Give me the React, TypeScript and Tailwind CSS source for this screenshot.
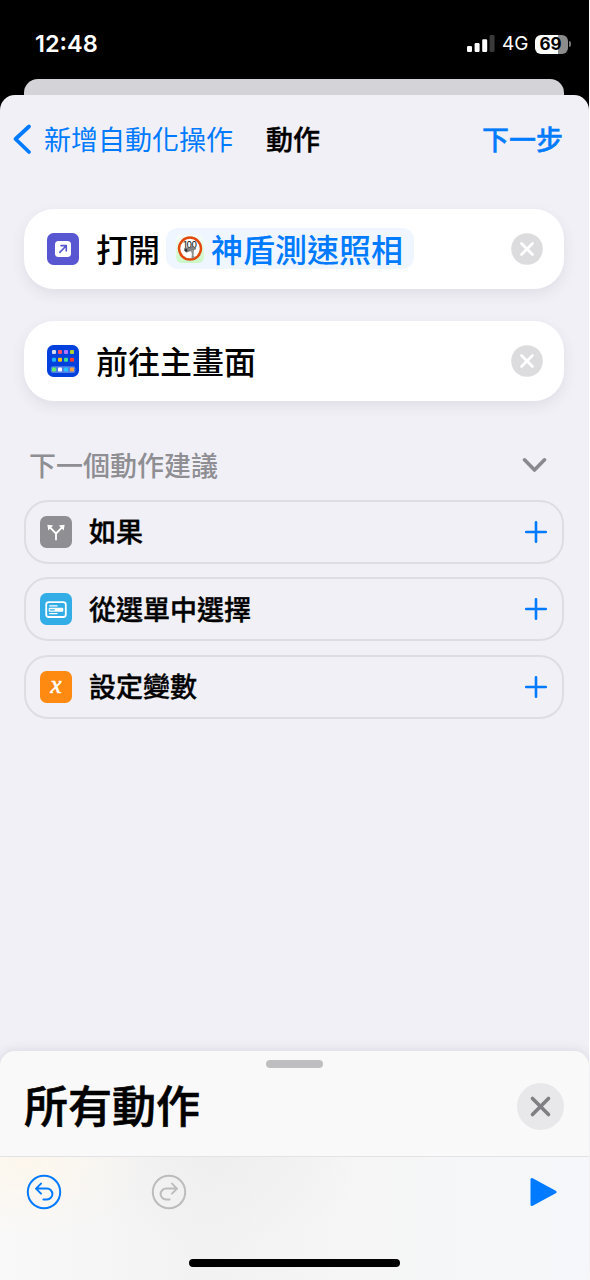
import type { ReactNode } from "react"

const BLUE = "#007aff"

function StatusBar() {
  return (
    <div className="flex h-[79px] items-start justify-between bg-black pt-[32px] pl-[35px] pr-[18px] font-['Inter',sans-serif] text-white">
      <span className="text-[23.5px] leading-[24px] font-semibold">12:48</span>
      <div className="flex h-6 items-center">
        <svg width="28" height="18" viewBox="0 0 28 18" className="mr-[7px]" fill="#fff">
          <rect x="0" y="11" width="5" height="6" rx="1.3" />
          <rect x="7.6" y="8" width="5" height="9" rx="1.3" />
          <rect x="15.2" y="4.3" width="5" height="12.7" rx="1.3" />
          <rect x="22.6" y="0" width="5" height="17" rx="1.3" fill="#3a3a3a" />
        </svg>
        <span className="mr-[7px] w-[26px] text-[19px] leading-6">4G</span>
        <div className="flex h-[19px] w-[33px] items-center justify-center rounded-[6px] bg-[linear-gradient(to_right,#fff_70%,#8c8c8c_70%)] pr-[2px] text-[17px] leading-none font-bold text-black">
          69
        </div>
        <div className="ml-[1px] h-[6px] w-[2px] rounded-r-full bg-[#777]" />
      </div>
    </div>
  )
}

function NavBar() {
  return (
    <div className="flex h-[88px] items-center pl-[12px] pr-[26px] text-[27px] leading-[38px]">
      <svg width="20" height="32" viewBox="0 0 20 32" fill="none" stroke={BLUE} strokeWidth="3.8" strokeLinecap="round" strokeLinejoin="round">
        <path d="M17 3.5 L3.5 16 L17 29" />
      </svg>
      <span className="mb-[1px] ml-[12px] font-normal text-[#007aff]">新增自動化操作</span>
      <span className="mb-[1px] ml-[33px] font-medium text-black [-webkit-text-stroke:0.4px]">動作</span>
      <span className="mb-[1px] ml-auto font-medium text-[#007aff] [-webkit-text-stroke:0.4px]">下一步</span>
    </div>
  )
}

function OpenAppIcon() {
  return (
    <svg width="32" height="32" viewBox="0 0 32 32" fill="none">
      <rect width="32" height="32" rx="6.5" fill="#5856d0" />
      <rect x="8" y="8" width="16" height="16" rx="3.5" fill="#fff" />
      <path d="M12.8 19.4 L19 13 M14 12.6 H19.3 V18" stroke="#5856d0" strokeWidth="1.6" strokeLinecap="round" strokeLinejoin="round" />
    </svg>
  )
}

const homeDots = [
  ["#d5dbe8", "#ff4d67", "#b472ff", "#b0d236"],
  ["#1cb4f5", "#ffc000", "#3ddc97", "#ff3b30"],
  ["#5cf06c", "#ffffff", "#28c6ff", "#ffa040"],
]

function HomeScreenIcon() {
  return (
    <svg width="32" height="32" viewBox="0 0 32 32">
      <rect width="32" height="32" rx="6.5" fill="#0040dd" />
      <rect x="3.7" y="21.2" width="24.6" height="6.8" rx="2" fill="#4f80e8" />
      {homeDots.map((row, r) =>
        row.map((color, c) => (
          <rect key={`${r}-${c}`} x={5 + c * 6} y={[5, 12.7, 22.6][r]} width="4" height="4" rx="1" fill={color} />
        ))
      )}
    </svg>
  )
}

function SpeedCameraIcon() {
  return (
    <svg width="28" height="28" viewBox="0 0 28 28" className="shrink-0">
      <defs>
        <linearGradient id="camBg" x1="0" y1="0" x2="0" y2="1">
          <stop offset="0" stopColor="#f8fdfb" />
          <stop offset="1" stopColor="#c9f7c4" />
        </linearGradient>
      </defs>
      <rect width="28" height="28" rx="6" fill="url(#camBg)" />
      <circle cx="14" cy="13.6" r="11" fill="#fff" stroke="#e24a0c" strokeWidth="2.5" />
      <text x="14" y="12.8" textAnchor="middle" fontSize="8.5" fontWeight="500" letterSpacing="-0.3" fontFamily="Inter, sans-serif" fill="#222">
        100
      </text>
      <path d="M8.4 13.6 L17.8 11.4 L19.8 14 L10 17.2 Z" fill="#858585" stroke="#555" strokeWidth="0.6" />
      <path d="M15 16 L18 14.8 L17.5 20.6 L19 22.4 L15.4 23.4 L15.9 19 Z" fill="#8f8f8f" />
      <circle cx="9.9" cy="15.2" r="1.4" fill="#333" />
    </svg>
  )
}

function ActionCard({ icon, children }: { icon: ReactNode; children: ReactNode }) {
  return (
    <div className="flex items-center rounded-[30px] bg-white pl-[23px] pr-[21px] text-[32px] font-medium text-black shadow-[0_5px_14px_rgba(60,60,90,0.09)]">
      {icon}
      <div className="ml-[17px] flex h-[80.5px] items-center leading-[41px]">{children}</div>
      <svg width="32" height="32" viewBox="0 0 32 32" className="ml-auto">
        <circle cx="16" cy="16" r="15.8" fill="#dcdcde" />
        <path d="M10.5 10.5 L21.5 21.5 M21.5 10.5 L10.5 21.5" stroke="#fff" strokeWidth="2.7" strokeLinecap="round" />
      </svg>
    </div>
  )
}

function BranchIcon() {
  return (
    <svg width="32" height="32" viewBox="0 0 32 32" fill="none">
      <rect width="32" height="32" rx="6.5" fill="#8e8e93" />
      <path d="M16 23.5 V17.5 L10 11.3 M16 17.5 L22 11.3" stroke="#fff" strokeWidth="1.8" strokeLinecap="round" strokeLinejoin="round" />
      <path d="M7.4 8.8 L13.2 9.4 L8.2 14.6 Z M24.6 8.8 L18.8 9.4 L23.8 14.6 Z" fill="#fff" />
    </svg>
  )
}

function MenuIcon() {
  return (
    <svg width="32" height="32" viewBox="0 0 32 32" fill="none">
      <rect width="32" height="32" rx="6.5" fill="#32ade6" />
      <rect x="6.2" y="9.2" width="19.6" height="14.8" rx="2.5" stroke="#fff" strokeWidth="1.8" />
      <path d="M9.8 12.9 H17 M9.8 20.6 H17" stroke="#fff" strokeWidth="1.3" strokeLinecap="round" />
      <rect x="8.7" y="14.8" width="14.6" height="4" rx="1" fill="#fff" />
      <path d="M10.2 16.8 H14.4" stroke="#32ade6" strokeWidth="1.3" strokeLinecap="round" />
    </svg>
  )
}

function VariableIcon() {
  return (
    <div className="flex h-8 w-8 items-center justify-center rounded-[6.5px] bg-[#ff8a12] pb-[4px] font-['Liberation_Serif',serif] text-[25px] leading-none font-normal text-white italic [-webkit-text-stroke:0.6px_white]">
      x
    </div>
  )
}

const suggestions = [
  { label: "如果", icon: <BranchIcon /> },
  { label: "從選單中選擇", icon: <MenuIcon /> },
  { label: "設定變數", icon: <VariableIcon /> },
]

function Suggestions() {
  return (
    <div className="mt-[43px]">
      <div className="flex h-[42px] items-center justify-between pl-[5px] pr-[17px]">
        <span className="mb-[1px] text-[27px] leading-[38px] font-medium text-[#8e8e93]">下一個動作建議</span>
        <svg width="25" height="16" viewBox="0 0 25 16" fill="none" stroke="#8a8a8e" strokeWidth="3.6" strokeLinecap="round" strokeLinejoin="round">
          <path d="M2.5 2.8 L12.5 13 L22.5 2.8" />
        </svg>
      </div>
      <div className="mt-[13.5px] flex flex-col gap-[13.5px]">
        {suggestions.map((item) => (
          <div key={item.label} className="flex h-[64px] items-center rounded-[24px] border-2 border-[#dedde2] pl-[14px] pr-[14px]">
            {item.icon}
            <span className="mb-[1px] ml-[17px] text-[27px] leading-[38px] font-medium text-black [-webkit-text-stroke:0.4px]">{item.label}</span>
            <svg width="24" height="24" viewBox="0 0 24 24" className="ml-auto" stroke={BLUE} strokeWidth="2.6" strokeLinecap="round">
              <path d="M12 2.2 V21.8 M2.2 12 H21.8" />
            </svg>
          </div>
        ))}
      </div>
    </div>
  )
}

function UndoIcon({ color, flipped }: { color: string; flipped?: boolean }) {
  return (
    <svg width="36" height="36" viewBox="0 0 36 36" fill="none" stroke={color} strokeWidth="2" strokeLinecap="round" strokeLinejoin="round" className={flipped ? "-scale-x-100" : ""}>
      <circle cx="18" cy="18" r="16.2" />
      <path d="M15 9.6 L10 14.6 L15 19.6 M10.5 14.6 H21 A5.3 5.3 0 0 1 21 25.4 H17.4" />
    </svg>
  )
}

function BottomSheet() {
  return (
    <div className="mt-auto rounded-t-[15px] bg-[#f9f9f9] shadow-[0_0_12px_rgba(60,60,90,0.14)]">
      <div className="flex h-[106px] flex-col border-b border-[#e3e3e5]">
        <div className="mt-[9px] h-2 w-[57px] shrink-0 self-center rounded-full bg-[#bfbfc1]" />
        <div className="flex h-[68px] items-center justify-between pt-[8px] pl-[24px] pr-[25px]">
          <span className="mb-[3px] text-[44px] leading-[53px] font-medium text-black [-webkit-text-stroke:0.6px]">所有動作</span>
          <svg width="47" height="47" viewBox="0 0 47 47">
            <circle cx="23.5" cy="23.5" r="23.5" fill="#e8e8ea" />
            <path d="M15.5 15.5 L31.5 31.5 M31.5 15.5 L15.5 31.5" stroke="#7f7f84" strokeWidth="3.6" strokeLinecap="round" />
          </svg>
        </div>
      </div>
      <div className="flex h-[123px] flex-col bg-[radial-gradient(ellipse_120px_75px_at_25px_5px,#fdf7ed,transparent),radial-gradient(ellipse_150px_90px_at_220px_0px,#efefef,transparent),linear-gradient(to_right,#f9f9f9,#f2f2f2_35%,#f6f6f6_60%,#f5f7fa)]">
        <div className="flex items-center pt-[17px] pl-[26px] pr-[32px]">
          <UndoIcon color={BLUE} />
          <div className="ml-[88.5px]">
            <UndoIcon color="#bcbcbc" flipped />
          </div>
          <svg width="27" height="30" viewBox="0 0 27 30" className="ml-auto">
            <path d="M2 2.5 V27.5 L25 15 Z" fill={BLUE} stroke={BLUE} strokeWidth="3" strokeLinejoin="round" />
          </svg>
        </div>
        <div className="mt-auto mb-[13px] h-2 w-[211px] self-center rounded-full bg-black" />
      </div>
    </div>
  )
}

export default function App() {
  return (
    <div className="h-[1280px] w-[590px] overflow-hidden bg-white font-['Noto_Sans_CJK_TC',sans-serif]">
      <div className="flex h-full w-[589px] flex-col bg-[linear-gradient(#000_120px,#f1f0f6_120px)]">
        <StatusBar />
        <div className="mr-[25px] ml-6 h-4 shrink-0 rounded-t-[14px] bg-[#d4d3d8]" />
        <div className="flex flex-1 flex-col rounded-t-[15px] bg-[#f1f0f6]">
          <NavBar />
          <div className="mt-[25.5px] flex flex-col pr-[25px] pl-6">
            <div className="flex flex-col gap-[31.5px]">
              <ActionCard icon={<OpenAppIcon />}>
                <span className="mb-[1px]">打開</span>
                <span className="ml-[6px] flex h-[41px] items-center gap-[7px] rounded-[12px] bg-[#eff6ff] pr-[11px] pl-[10px] text-[#007aff]">
                  <SpeedCameraIcon />
                  <span className="mb-[1px]">神盾測速照相</span>
                </span>
              </ActionCard>
              <ActionCard icon={<HomeScreenIcon />}>
                <span className="mb-[1px]">前往主畫面</span>
              </ActionCard>
            </div>
            <Suggestions />
          </div>
          <BottomSheet />
        </div>
      </div>
    </div>
  )
}
